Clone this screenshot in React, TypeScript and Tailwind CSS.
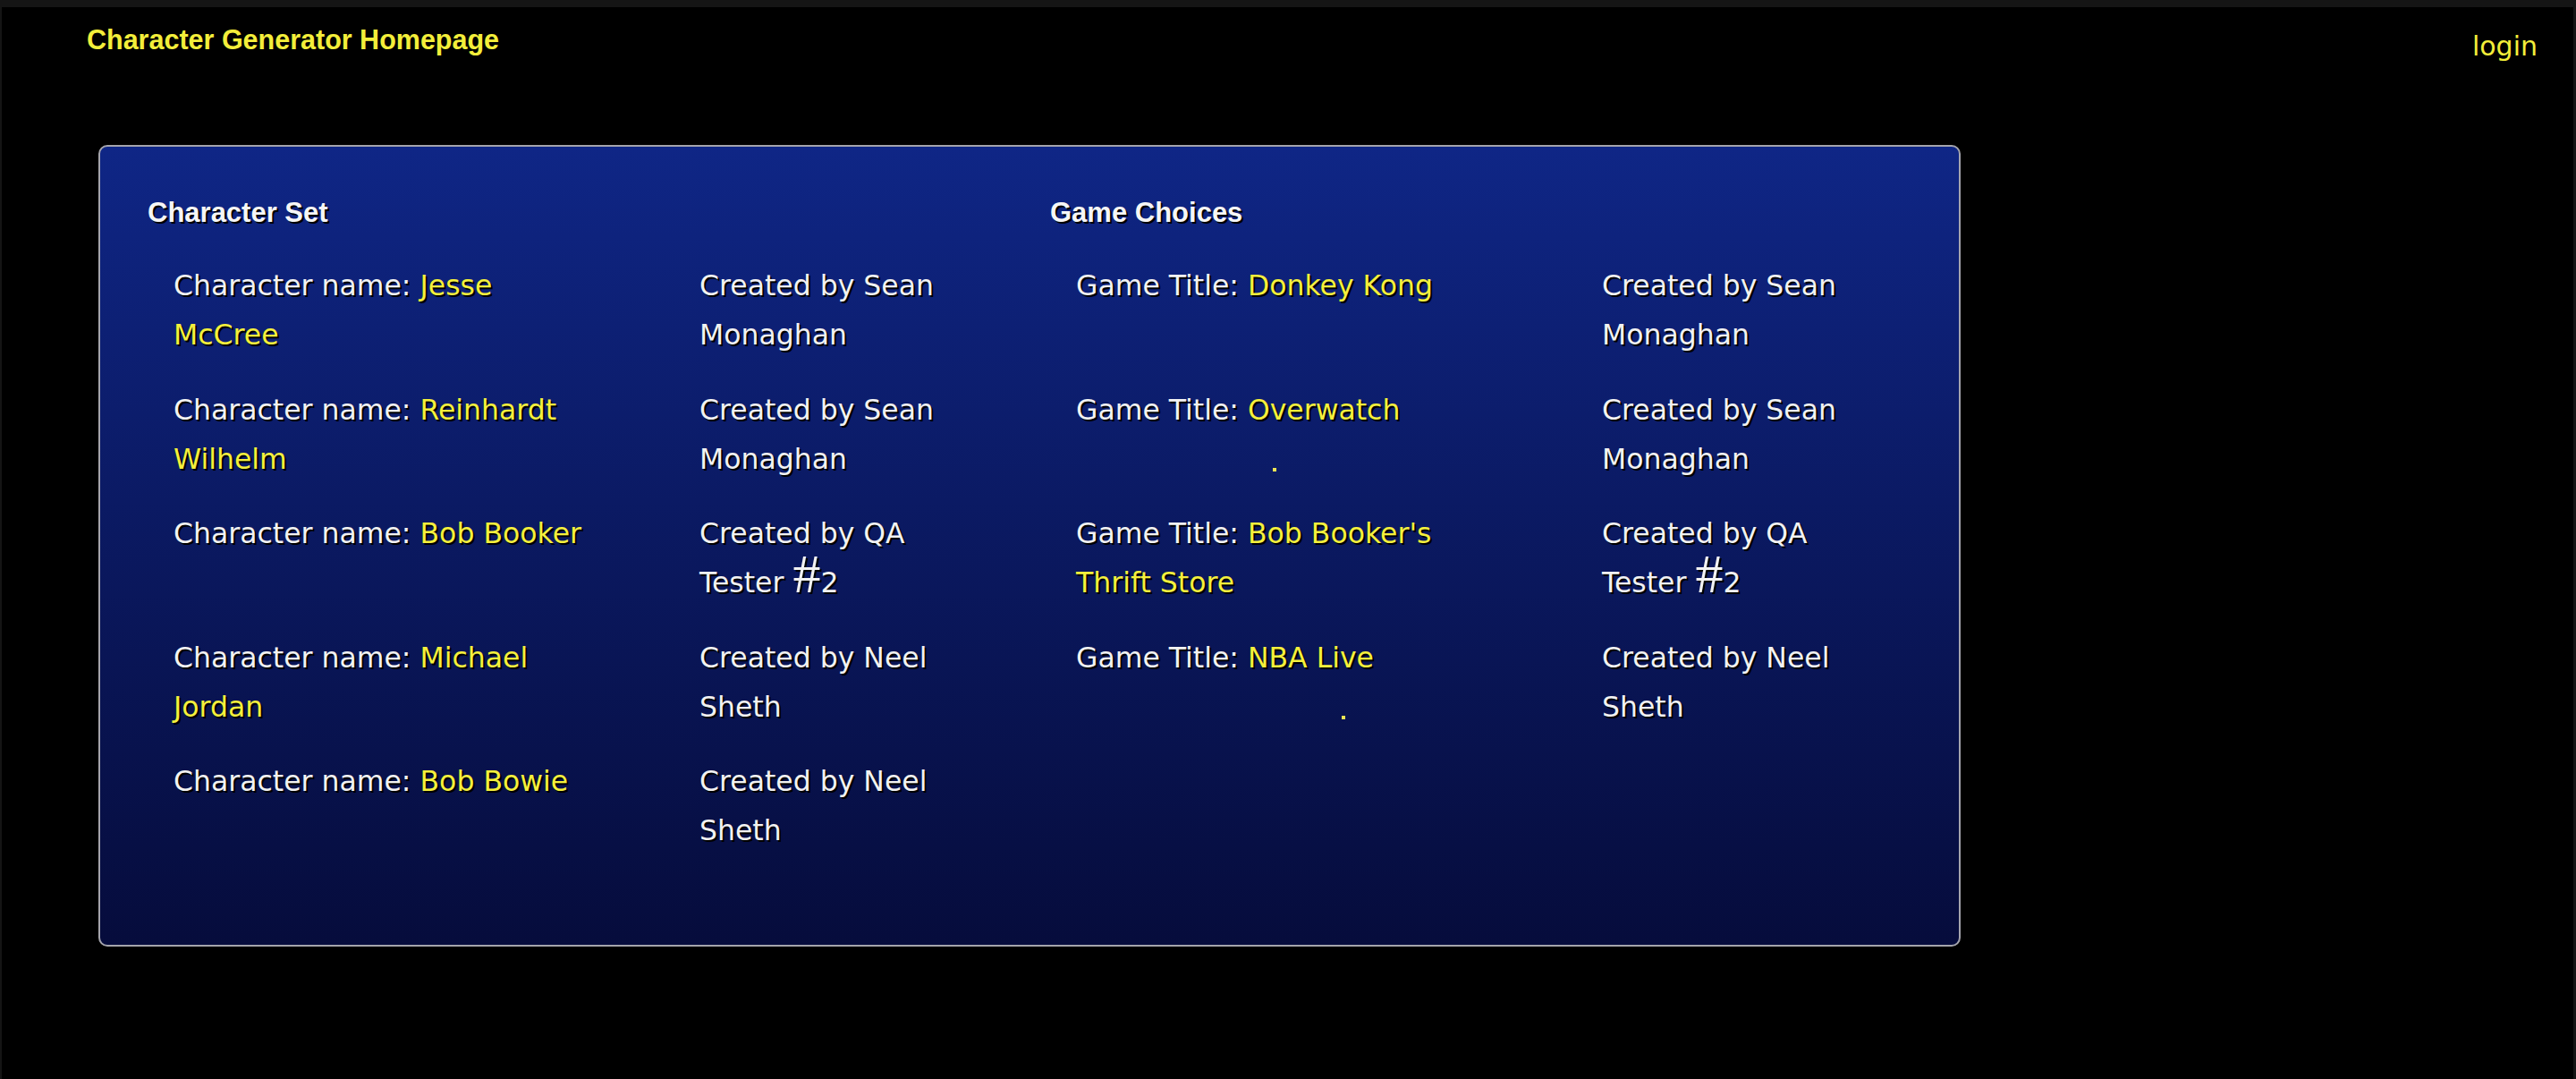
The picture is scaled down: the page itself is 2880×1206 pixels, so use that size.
import React from "react";

type Row = { label: string; value: string; by: string; dot?: string };

const characters: Row[] = [
  { label: "Character name:", value: "Jesse McCree", by: "Sean Monaghan" },
  { label: "Character name:", value: "Reinhardt Wilhelm", by: "Sean Monaghan" },
  { label: "Character name:", value: "Bob Booker", by: "QA Tester #2" },
  { label: "Character name:", value: "Michael Jordan", by: "Neel Sheth" },
  { label: "Character name:", value: "Bob Bowie", by: "Neel Sheth" },
];

const games: Row[] = [
  { label: "Game Title:", value: "Donkey Kong", by: "Sean Monaghan" },
  { label: "Game Title:", value: "Overwatch", by: "Sean Monaghan", dot: "ml-[220px]" },
  { label: "Game Title:", value: "Bob Booker's Thrift Store", by: "QA Tester #2" },
  { label: "Game Title:", value: "NBA Live", by: "Neel Sheth", dot: "ml-[297px]" },
];

function Creator({ by }: { by: string }) {
  if (by.includes("#")) {
    const [before, after] = by.split("#");
    return (
      <div>
        Created by {before}
        <span className="font-['Liberation_Serif','Times_New_Roman',serif] text-[62px] leading-[0]">#</span>
        {after}
      </div>
    );
  }
  return <div>Created by {by}</div>;
}

function Entry({ row }: { row: Row }) {
  return (
    <div className="grid grid-cols-[588px_300px] h-[110px]">
      <div className="max-w-[472px]">
        {row.label} <span className="text-[#f5f03c]">{row.value}</span>
        {row.dot ? (
          <>
            <br />
            <span className={`inline-block w-[4px] h-[4px] bg-[#ece455] align-[-3px] ${row.dot}`} />
          </>
        ) : null}
      </div>
      <Creator by={row.by} />
    </div>
  );
}

function Column({ title, rows }: { title: string; rows: Row[] }) {
  return (
    <div className="flex flex-col">
      <h2 className="font-['Liberation_Sans',Arial,sans-serif] font-bold text-[31px] leading-[35px] text-[#f6f6f6]">
        {title}
      </h2>
      <div className="mt-[37px] pl-[29px] flex flex-col gap-[28.5px]">
        {rows.map((r, i) => (
          <Entry key={i} row={r} />
        ))}
      </div>
    </div>
  );
}

export default function App() {
  return (
    <div className="min-h-[1206px] bg-black border-t-8 border-l-2 border-r-[3px] border-[#151515]">
      <header className="flex justify-between items-start h-[154px] pl-[95px] pr-[40px] pt-[19px]">
        <h1 className="font-['Liberation_Sans',Arial,sans-serif] font-bold text-[30.5px] leading-[34px] text-[#f3ee3a]">
          Character Generator Homepage
        </h1>
        <a className="mt-[8px] font-['DejaVu_Sans',Verdana,sans-serif] text-[30px] leading-[34px] text-[#f3ee3a]">
          login
        </a>
      </header>
      <div className="ml-[108px] w-[2082px] h-[896px] rounded-[10px] border-2 border-[#a4a4ac] bg-gradient-to-b from-[#0f2686] to-[#060c3c] pl-[53px] pt-[56px] font-['DejaVu_Sans',Verdana,sans-serif] text-[31.5px] leading-[55px] text-[#f2f2f2] [text-shadow:2px_2px_0_#000]">
        <div className="grid grid-cols-[1009px_1009px]">
          <Column title="Character Set" rows={characters} />
          <Column title="Game Choices" rows={games} />
        </div>
      </div>
    </div>
  );
}
